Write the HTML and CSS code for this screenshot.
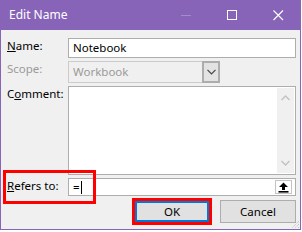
FILE: index.html
```html
<!DOCTYPE html>
<html lang="en">
<head>
  <meta charset="UTF-8">
  <title>Edit Name</title>
  <link rel="stylesheet" href="styles.css">
</head>
<body>
  <div class="window">
    <div class="titlebar">
      <span class="title">Edit Name</span>
      <div class="caption">
        <span class="cap-btn"><svg width="11" height="11" viewBox="0 0 11 11"><line x1="0" y1="5.5" x2="10" y2="5.5" stroke="#a48dcb" stroke-width="1"/></svg></span>
        <span class="cap-btn"><svg width="11" height="11" viewBox="0 0 11 11"><rect x="0.5" y="0.5" width="9" height="9" fill="none" stroke="#fff" stroke-width="1"/></svg></span>
        <span class="cap-btn"><svg width="11" height="11" viewBox="0 0 11 11"><path d="M0.5 0.5 L10 10 M10 0.5 L0.5 10" stroke="#fff" stroke-width="1.1"/></svg></span>
      </div>
    </div>

    <div class="content">
      <div class="row">
        <span class="lbl"><u>N</u>ame:</span>
        <div class="field name">Notebook</div>
      </div>

      <div class="row">
        <span class="lbl disabled">Scope:</span>
        <div class="select">
          <span class="select-text">Workbook</span>
          <span class="select-btn"><svg width="9" height="6" viewBox="0 0 9 6"><path d="M0.5 0.8 L4.5 4.8 L8.5 0.8" fill="none" stroke="#444" stroke-width="1.2"/></svg></span>
        </div>
      </div>

      <div class="row">
        <span class="lbl">C<u>o</u>mment:</span>
        <div class="textarea">
          <div class="scrollbar">
            <svg width="9" height="6" viewBox="0 0 9 6"><path d="M0.5 5 L4.5 1 L8.5 5" fill="none" stroke="#c2c2c2" stroke-width="1.4"/></svg>
            <svg width="9" height="6" viewBox="0 0 9 6"><path d="M0.5 1 L4.5 5 L8.5 1" fill="none" stroke="#c2c2c2" stroke-width="1.4"/></svg>
          </div>
        </div>
      </div>

      <div class="row refers-row">
        <span class="lbl"><u>R</u>efers to:</span>
        <div class="field refers">
          <span>=</span><span class="caret"></span>
          <span class="collapse-btn"><svg width="11" height="11" viewBox="0 0 11 11"><path d="M5.5 0.5 L10 5 L7 5 L7 8 L4 8 L4 5 L1 5 Z" fill="#000"/><rect x="0.5" y="9" width="10" height="1.6" fill="#000"/></svg></span>
        </div>
        <span class="highlight"></span>
      </div>

      <div class="buttons">
        <button class="btn ok">OK</button>
        <button class="btn">Cancel</button>
      </div>

      <span class="grip"><svg width="9" height="9" viewBox="0 0 9 9"><path d="M8 1 L1 8 M8 4 L4 8 M8 7 L7 8" stroke="#b4b4b4" stroke-width="1" stroke-dasharray="1 1"/></svg></span>
    </div>
  </div>
</body>
</html>
```

FILE: styles.css
```css
body { margin: 0; background: #fff; font-family: "Noto Sans", sans-serif; font-size: 11.5px; color: #000; }
.window { width: 301px; height: 230px; background: #f0f0f0; display: flex; flex-direction: column; }

.titlebar { height: 30px; flex-shrink: 0; background: #8764b8; color: #fff; display: flex; align-items: center; }
.title { flex: 1; padding-left: 9px; font-size: 12px; padding-bottom: 1px; }
.caption { display: flex; align-self: stretch; }
.cap-btn { width: 46px; display: flex; align-items: center; justify-content: center; }
.cap-btn svg { display: block; }

.content { flex: 1; position: relative; border: 1px solid #8764b8; border-top: 0; padding: 8px 4px 0 6px; }
.row { display: flex; margin-bottom: 3px; }
.lbl { width: 61px; flex-shrink: 0; line-height: 16px; }
.lbl.disabled { color: #9a9a9a; }

.field { flex: 1; box-sizing: border-box; height: 20px; border: 1px solid #adadad; background: #fff; line-height: 18px; padding: 0 4px; display: flex; align-items: center; }
.field.name { font-size: 11.5px; }

.select { width: 152px; height: 22px; box-sizing: border-box; border: 1px solid #cccccc; background: #f0f0f0; display: flex; }
.select-text { flex: 1; color: #9a9a9a; line-height: 20px; padding-left: 4px; }
.select-btn { width: 18px; margin: -1px -1px -1px 0; box-sizing: border-box; border: 2px solid #adadad; background: #e3e3e3; display: flex; align-items: center; justify-content: center; }
.select-btn svg { display: block; }

.textarea { flex: 1; height: 89px; box-sizing: border-box; border: 1px solid #adadad; background: #fff; display: flex; justify-content: flex-end; }
.scrollbar { width: 17px; margin: 1px 1px 1px 0; background: #f0f0f0; display: flex; flex-direction: column; justify-content: space-between; align-items: center; padding: 7px 0 7px; }
.scrollbar svg { display: block; }

.refers-row { position: relative; }
.refers { height: 18px; }
.caret { width: 1px; height: 13px; background: #000; margin-left: 1px; }
.collapse-btn { margin-left: auto; width: 17px; height: 14px; box-sizing: border-box; border: 1px solid #c4c4c4; background: #fff; display: flex; align-items: center; justify-content: center; margin-right: -1px; }
.collapse-btn svg { display: block; }
.highlight { position: absolute; left: -4px; top: -8px; width: 87px; height: 28px; border: 3px solid #ff0000; }

.buttons { display: flex; justify-content: flex-end; gap: 10px; margin-top: 4px; }
.btn { width: 76px; height: 23px; box-sizing: border-box; font-family: "Noto Sans", sans-serif; font-size: 11.5px; color: #000; background: #e1e1e1; border: 1px solid #adadad; padding: 0; margin: 0; }
.btn.ok { border: 3px solid #0078d7; outline: 3px solid #ff0000; outline-offset: -1px; }

.grip { position: absolute; right: 0; bottom: 0; line-height: 0; }
```
